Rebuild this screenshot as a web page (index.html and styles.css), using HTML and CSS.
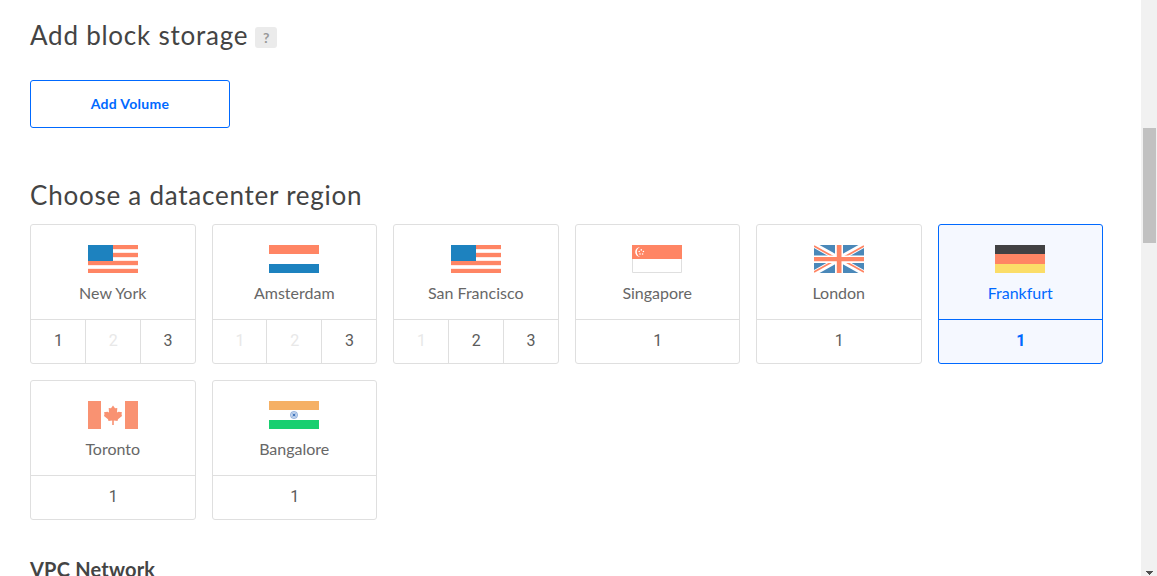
FILE: index.html
```html
<!DOCTYPE html>
<html lang="en">
<head>
<meta charset="utf-8">
<title>Create Droplet</title>
<link rel="stylesheet" href="styles.css">
</head>
<body>
<svg class="symbols" width="0" height="0">
  <symbol id="flag-us" viewBox="0 0 50 28">
    <path fill="#ffeae4" d="M0 0h50v28H0z"/><path fill="#fff" d="M0 5h50v2H0zM0 13h50v2H0zM0 21h50v2H0z"/>
    <path fill="#ff8564" d="M0 0h50v4H0zM0 8h50v4H0zM0 16h50v4H0zM0 24h50v4H0z"/>
    <path fill="#1d82bf" d="M0 0h25v16H0z"/>
  </symbol>
  <symbol id="flag-nl" viewBox="0 0 50 28">
    <path fill="#ff8564" d="M0 0h50v9H0z"/><path fill="#fff" d="M0 9h50v10H0z"/><path fill="#1d82bf" d="M0 19h50v9H0z"/>
  </symbol>
  <symbol id="flag-sg" viewBox="0 0 50 28">
    <path fill="#fff" stroke="#dfdfdf" d="M.5.5h49v27H.5z"/><path fill="#ff8564" d="M0 0h50v14H0z"/>
    <path fill="#fff" d="M8 2.200a4.800 4.800 0 1 0 0 9.600a5.200 5.200 0 0 1 0-9.600z"/>
    <g fill="#fff"><circle cx="9.300" cy="4.900" r=".8"/><circle cx="7.200" cy="6.500" r=".8"/><circle cx="11.400" cy="6.500" r=".8"/><circle cx="8" cy="9" r=".8"/><circle cx="10.600" cy="9" r=".8"/></g>
  </symbol>
  <symbol id="flag-uk" viewBox="0 0 50 28">
    <path fill="#4a88b9" d="M0 0h50v28H0z"/>
    <path stroke="#fff" stroke-width="5.400" d="M0 0l50 28M50 0L0 28"/>
    <path stroke="#ff8564" stroke-width="1.800" d="M0 1l22 12.300M28 14.700l22 12.300M50 1L28 13.300M22 14.700L0 27"/>
    <path fill="#fff" d="M21 0h8v28h-8zM0 10.500h50v7.500H0z"/>
    <path fill="#ff8564" d="M22.800 0h4.700v28h-4.700zM0 12h50v4.300H0z"/>
  </symbol>
  <symbol id="flag-de" viewBox="0 0 50 28">
    <path fill="#424143" d="M0 0h50v9H0z"/><path fill="#ff8564" d="M0 9h50v10H0z"/><path fill="#fbdd68" d="M0 19h50v9H0z"/>
  </symbol>
  <symbol id="flag-ca" viewBox="0 0 50 28">
    <path fill="#f99272" d="M0 0h13v28H0zM37 0h13v28H37z"/>
    <path fill="#f99272" d="M25 4.500L27 7.200 29.300 7 29 11.500 30.500 10.800 34 11.200 33.500 13 34 15 30 18.200 29.500 20 25.800 19.600V24H24.200V19.600L20.500 20 20 18.200 16 15 16.500 13 16 11.200 19.500 10.800 21 11.500 20.700 7 23 7.200z"/>
  </symbol>
  <symbol id="flag-in" viewBox="0 0 50 28">
    <path fill="#f5b065" d="M0 0h50v9H0z"/><path fill="#fff" d="M0 9h50v10H0z"/><path fill="#18cf70" d="M0 19h50v9H0z"/>
    <circle cx="25" cy="14" r="3.600" fill="#c3d5ee" stroke="#9db9e0"/><path stroke="#8eaeda" stroke-width=".6" d="M22 11l6 6M28 11l-6 6"/><circle cx="25" cy="14" r="1.300" fill="#4478bd"/>
  </symbol>
</svg>
<div class="page">
  <main class="content">
    <h2 class="title"><span class="title-storage">Add block storage</span><span class="help">?</span></h2>
    <button class="add-volume">Add Volume</button>
    <h2 class="title title-region">Choose a datacenter region</h2>
    <div class="regions">
      <div class="region"><div class="place"><svg class="flag"><use href="#flag-us"/></svg><span class="name">New York</span></div><div class="slots"><span class="slot">1</span><span class="slot off">2</span><span class="slot">3</span></div></div>
      <div class="region"><div class="place"><svg class="flag"><use href="#flag-nl"/></svg><span class="name">Amsterdam</span></div><div class="slots"><span class="slot off">1</span><span class="slot off">2</span><span class="slot">3</span></div></div>
      <div class="region"><div class="place"><svg class="flag"><use href="#flag-us"/></svg><span class="name">San Francisco</span></div><div class="slots"><span class="slot off">1</span><span class="slot">2</span><span class="slot">3</span></div></div>
      <div class="region"><div class="place"><svg class="flag"><use href="#flag-sg"/></svg><span class="name">Singapore</span></div><div class="slots"><span class="slot">1</span></div></div>
      <div class="region"><div class="place"><svg class="flag"><use href="#flag-uk"/></svg><span class="name">London</span></div><div class="slots"><span class="slot">1</span></div></div>
      <div class="region selected"><div class="place"><svg class="flag"><use href="#flag-de"/></svg><span class="name">Frankfurt</span></div><div class="slots"><span class="slot">1</span></div></div>
      <div class="region"><div class="place"><svg class="flag"><use href="#flag-ca"/></svg><span class="name">Toronto</span></div><div class="slots"><span class="slot">1</span></div></div>
      <div class="region"><div class="place"><svg class="flag"><use href="#flag-in"/></svg><span class="name">Bangalore</span></div><div class="slots"><span class="slot">1</span></div></div>
    </div>
    <h3 class="subtitle">VPC Network</h3>
  </main>
  <div class="scrollbar"><div class="thumb"></div><svg class="arrow" viewBox="0 0 7 4" shape-rendering="crispEdges"><path fill="#505050" d="M0 0h7v1H0zM1 1h5v1H1zM2 2h3v1H2zM3 3h1v1H3z"/></svg></div>
</div>
</body>
</html>
```
FILE: styles.css
```css
* { box-sizing: border-box; }
body { margin: 0; background: #fff; font-family: Lato, "Open Sans", sans-serif; color: #444; }
.symbols { display: none; }
.page { display: flex; height: 576px; overflow: hidden; }
.content { flex: 1; padding: 15px 38px 0 30px; }
.title { display: flex; align-items: center; margin: 0; height: 40px; font-size: 26px; font-weight: 400; letter-spacing: .76px; white-space: nowrap; }
.help { display: flex; align-items: center; justify-content: center; width: 22px; height: 21px; margin: 4px 0 0 7px; border-radius: 3px; background: #ebebeb; color: #999; font-size: 14px; font-weight: 700; letter-spacing: 0; }
.add-volume { display: block; width: 200px; height: 48px; margin: 25px 0 47px; padding: 0 0 2px; border: 1px solid #0069ff; border-radius: 3px; background: #fff; color: #0069ff; font: 700 14px Lato, sans-serif; letter-spacing: .3px; }
.regions { display: grid; grid-template-columns: repeat(6, 1fr); gap: 16px; margin-top: 9px; }
.region { height: 140px; border: 1px solid #dfdfdf; border-radius: 3px; color: #676767; }
.place { display: flex; flex-direction: column; align-items: center; height: 94px; padding-top: 20px; }
.flag { width: 50px; height: 28px; flex: none; }
.name { margin-top: 8px; font-size: 16px; line-height: 24px; white-space: nowrap; }
.slots { display: flex; height: 44px; border-top: 1px solid #dfdfdf; }
.slot { flex: 1; padding-left: 1px; border-right: 1px solid #dfdfdf; text-align: center; font: 16px/42px Roboto, sans-serif; color: #5b5b5b; }
.slot:last-child { border-right: 0; }
.slot.off { color: #e8e8e8; }
.selected { border-color: #0069ff; background: #f5f8ff; color: #0069ff; }
.selected .slots { border-color: #0069ff; }
.selected .slot { color: #0069ff; font-weight: 700; }
.subtitle { margin: 36px 0 0; font-size: 20px; line-height: 26px; font-weight: 700; letter-spacing: .2px; }
.scrollbar { display: flex; flex-direction: column; width: 16px; padding: 128px 1px 1px 2px; background: #f1f1f1; }
.thumb { height: 115px; flex: none; background: #c1c1c1; }
.arrow { width: 7px; height: 4px; margin: auto 0 0 3px; }
```
